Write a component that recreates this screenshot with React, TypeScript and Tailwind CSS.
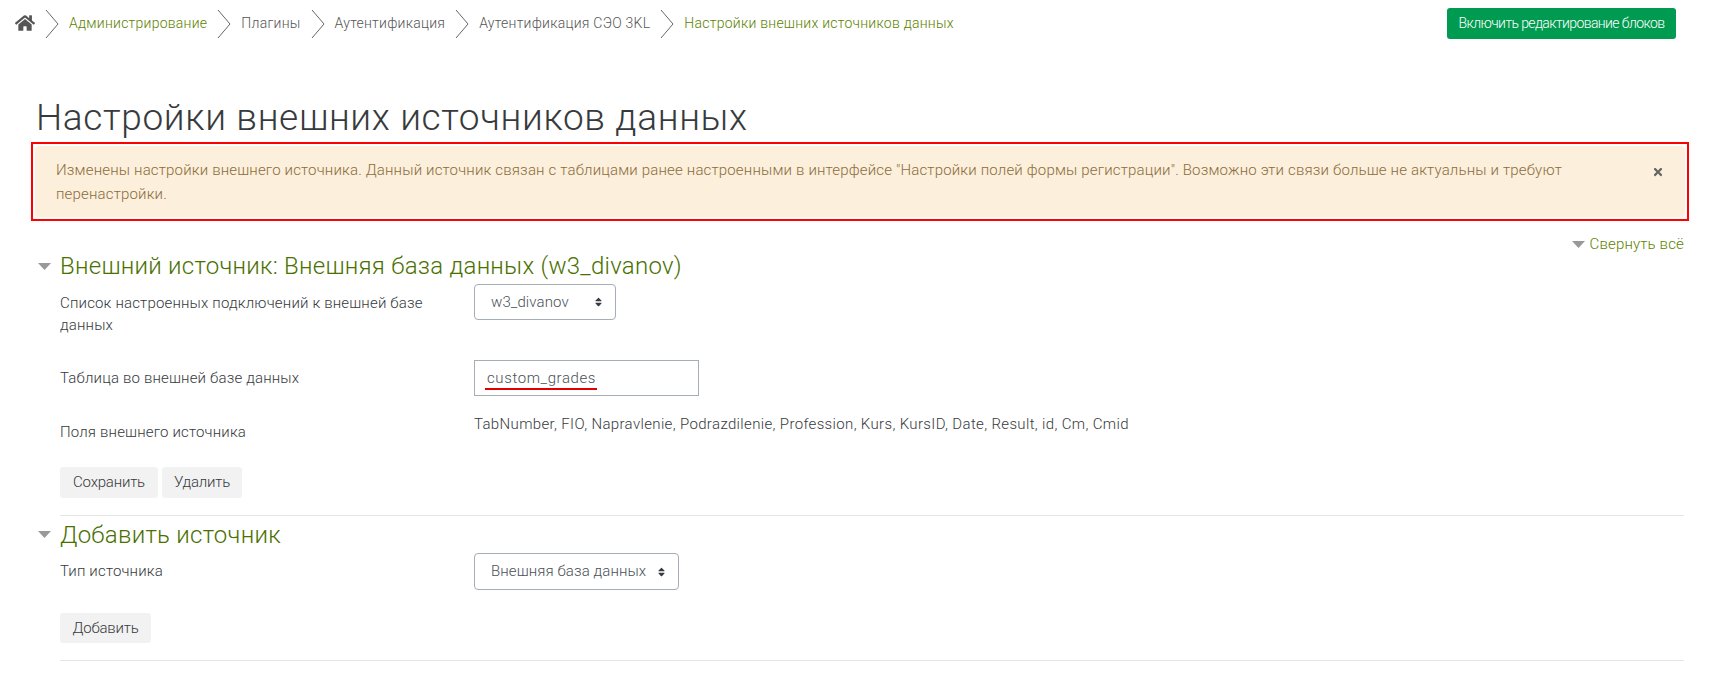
import { FaHome, FaSort, FaTimes } from 'react-icons/fa';

const crumbs = [
  { label: 'Администрирование', link: true },
  { label: 'Плагины', link: false },
  { label: 'Аутентификация', link: false },
  { label: 'Аутентификация СЭО 3KL', link: false },
  { label: 'Настройки внешних источников данных', link: true },
];

function Chevron() {
  return (
    <svg width="14" height="30" viewBox="0 0 14 30" fill="none" className="shrink-0 text-[#666]">
      <path d="M1 1 L13 15 L1 29" stroke="currentColor" strokeWidth="1" />
    </svg>
  );
}

function Caret() {
  return (
    <svg width="13" height="7" viewBox="0 0 13 7" className="shrink-0">
      <path d="M0 0 H13 L6.5 7 Z" fill="#999" />
    </svg>
  );
}

function SelectBox({ value, className }: { value: string; className: string }) {
  return (
    <div className={'relative ' + className}>
      <select
        defaultValue={value}
        className="h-full w-full appearance-none rounded-[4px] border border-[#a5adb5] bg-white pl-[16px] text-[15px] tracking-[0.1px] text-[#495057]"
      >
        <option>{value}</option>
      </select>
      <FaSort className="absolute right-[12px] top-1/2 -translate-y-1/2 text-[11px] text-[#343a40]" />
    </div>
  );
}

function GrayButton({ children, className }: { children: string; className: string }) {
  return (
    <button className={'flex items-center justify-center rounded-[3px] bg-[#f2f2f2] text-[15px] tracking-[-0.2px] text-[#373a3c] ' + className}>
      {children}
    </button>
  );
}

export default function App() {
  return (
    <div className="h-[675px] w-[1715px] overflow-hidden bg-white font-['Roboto',sans-serif] text-[15px] font-light tracking-[0.17px] text-[#373a3c]">
      <div className="flex h-[46px] items-center pr-[39px] pl-[15px]">
        <FaHome className="text-[20px] text-[#555]" />
        <ol className="mt-[1px] ml-[10px] flex items-center">
          {crumbs.map((c) => (
            <li key={c.label} className="flex items-center">
              <Chevron />
              <span className={(c.link ? 'text-[#5d8200]' : 'text-[#555]') + ' mx-[10px] text-[14px] tracking-[0.25px] whitespace-nowrap'}>{c.label}</span>
            </li>
          ))}
        </ol>
        <button className="ml-auto flex h-[31px] w-[229px] items-center justify-center rounded-[3px] bg-[#009b50] text-[14px] tracking-[-0.6px] whitespace-nowrap text-white">
          Включить редактирование блоков
        </button>
      </div>

      <h1 className="mt-[49px] ml-[36px] text-[37px] leading-[46px] font-light tracking-[0.65px] text-[#373a3c]">
        Настройки внешних источников данных
      </h1>

      <div className="mt-[1px] ml-[31px] w-[1658px] border-2 border-[#ff0000] p-[2px]">
        <div className="relative h-[71px] rounded-[4px] bg-[#fcefdc] pt-[12px] pr-[100px] pl-[21px] leading-[24px] text-[#8a6d3b]">
          Изменены настройки внешнего источника. Данный источник связан с таблицами ранее настроенными в интерфейсе "Настройки полей формы регистрации". Возможно эти связи больше не актуальны и требуют перенастройки.
          <FaTimes className="absolute top-[20px] right-[21px] text-[12px] text-[#666]" />
        </div>
      </div>

      <div className="mt-[13px] mr-[31px] flex items-center justify-end gap-[4px] leading-[20px] text-[#5d8200]">
        <Caret />
        Свернуть всё
      </div>

      <section className="-mt-[5px] ml-[38px] w-[1646px]">
        <div className="flex h-[34px] items-center gap-[9px]">
          <Caret />
          <h2 className="text-[24px] font-light tracking-[0.26px] text-[#4a7000]">Внешний источник: Внешняя база данных (w3_divanov)</h2>
        </div>
        <div className="pl-[22px]">
          <div className="mt-[1px] flex h-[76px]">
            <label className="w-[414px] pt-[8px] pr-[30px] leading-[22px]">Список настроенных подключений к внешней базе данных</label>
            <SelectBox value="w3_divanov" className="h-[36px] w-[142px]" />
          </div>
          <div className="flex h-[53px]">
            <label className="w-[414px] pt-[7px]">Таблица во внешней базе данных</label>
            <div className="relative h-[36px] w-[225px]">
              <input
                defaultValue="custom_grades"
                className="h-full w-full border border-[#a5adb5] pl-[12px] tracking-[0.6px] text-[#495057]"
              />
              <span className="absolute top-[28px] left-[11px] h-[2px] w-[112px] bg-[#e00000]" />
            </div>
          </div>
          <div className="flex h-[54px]">
            <label className="w-[414px] pt-[8px]">Поля внешнего источника</label>
            <span className="tracking-[0.35px]">TabNumber, FIO, Napravlenie, Podrazdilenie, Profession, Kurs, KursID, Date, Result, id, Cm, Cmid</span>
          </div>
          <div className="flex gap-[4px]">
            <GrayButton className="h-[31px] w-[98px]">Сохранить</GrayButton>
            <GrayButton className="h-[31px] w-[80px]">Удалить</GrayButton>
          </div>
          <hr className="mt-[17px] border-[#e5e5e5]" />
        </div>
      </section>

      <section className="ml-[38px] w-[1646px]">
        <div className="flex h-[37px] items-center gap-[9px]">
          <Caret />
          <h2 className="text-[24px] font-light tracking-[0.26px] text-[#4a7000]">Добавить источник</h2>
        </div>
        <div className="pl-[22px]">
          <div className="flex h-[60px]">
            <label className="w-[414px] pt-[7px]">Тип источника</label>
            <SelectBox value="Внешняя база данных" className="h-[37px] w-[205px]" />
          </div>
          <GrayButton className="h-[30px] w-[91px]">Добавить</GrayButton>
          <hr className="mt-[17px] border-[#e5e5e5]" />
        </div>
      </section>
    </div>
  );
}
